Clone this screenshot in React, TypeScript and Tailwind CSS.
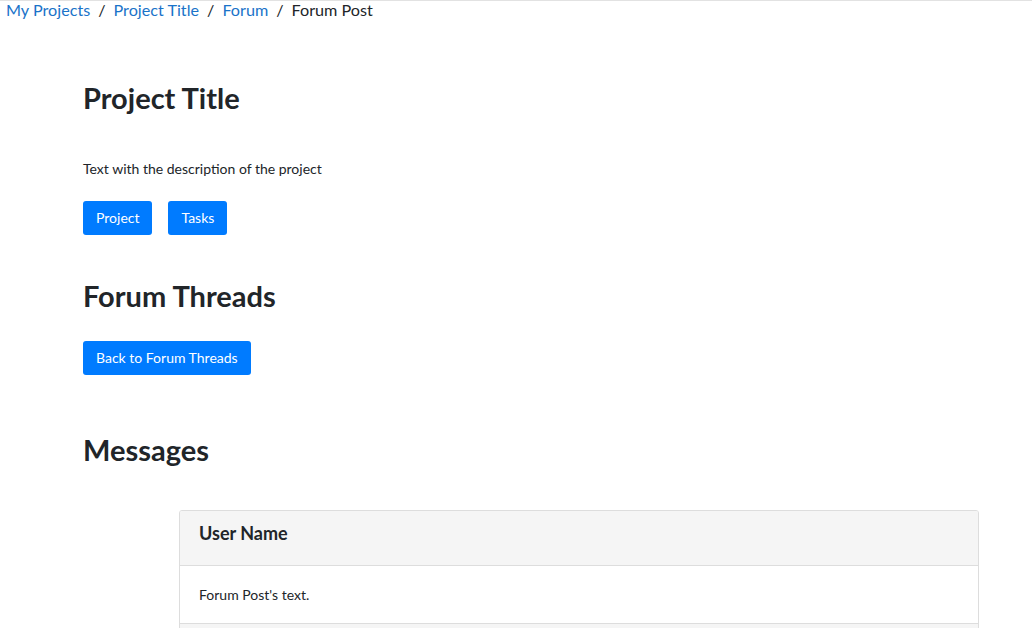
const font = { fontFamily: 'Lato, "Noto Sans", sans-serif' };

const crumbs = ['My Projects', 'Project Title', 'Forum'];

function Button({ label }: { label: string }) {
    return (
        <button className="h-[34px] px-[13px] bg-[#007bff] text-white text-[14px] rounded-[3px] leading-none">
            {label}
        </button>
    );
}

export default function App() {
    return (
        <div className="min-h-screen bg-white text-[#212529] border-t border-[#e2e2e2]" style={font}>
            <nav className="flex items-center px-[6px] h-[18px] text-[16.2px] leading-none">
                {crumbs.map((c) => (
                    <span key={c} className="flex items-center">
                        <a href="#" className="text-[#1a73c9]">{c}</a>
                        <span className="px-2 text-[#212529]">/</span>
                    </span>
                ))}
                <span>Forum Post</span>
            </nav>

            <div className="pl-[83px] pr-[53px]">
                <h2 className="mt-[63px] text-[29px] font-bold leading-[32px]">Project Title</h2>
                <p className="mt-[45px] text-[14px] leading-[20px]">Text with the description of the project</p>
                <div className="mt-[22px] flex gap-4">
                    <Button label="Project" />
                    <Button label="Tasks" />
                </div>

                <h2 className="mt-[45px] text-[29px] font-bold leading-[32px]">Forum Threads</h2>
                <div className="mt-[29px]">
                    <Button label="Back to Forum Threads" />
                </div>

                <h2 className="mt-[59px] text-[29px] font-bold leading-[32px]">Messages</h2>

                <div className="mt-[44px] ml-[96px] border border-[#dddddd] rounded-[3px] overflow-hidden">
                    <div className="h-[55px] bg-[#f5f5f5] border-b border-[#dddddd] pt-[11px] px-[19px]">
                        <h4 className="text-[18px] font-bold leading-[22px]">User Name</h4>
                    </div>
                    <div className="h-[57px] flex items-center px-[19px] text-[14px]">
                        Forum Post's text.
                    </div>
                    <div className="h-[40px] bg-[#f5f5f5] border-t border-[#dddddd]" />
                </div>
            </div>
        </div>
    );
}
